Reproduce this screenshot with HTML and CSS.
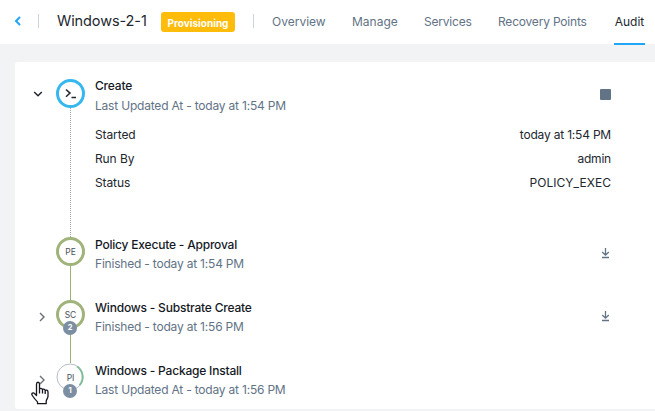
FILE: index.html
```html
<!DOCTYPE html>
<html lang="en">
<head>
<meta charset="utf-8">
<title>Windows-2-1 Audit</title>
<link rel="stylesheet" href="styles.css">
</head>
<body>
<header class="header">
  <svg class="back" width="8" height="12" viewBox="0 0 8 12"><path d="M6 2 2 6l4 4"/></svg>
  <span class="divider first"></span>
  <h1 class="name">Windows-2-1</h1>
  <span class="badge">Provisioning</span>
  <span class="divider second"></span>
  <nav class="tabs">
    <a class="tab overview">Overview</a>
    <a class="tab manage">Manage</a>
    <a class="tab services">Services</a>
    <a class="tab recovery">Recovery Points</a>
    <a class="tab audit active">Audit</a>
  </nav>
</header>
<main class="card">
  <section class="row expanded">
    <div class="toggle"><svg width="10" height="8" viewBox="0 0 10 8"><path d="m1.2 2 3.8 3.8L8.8 2"/></svg></div>
    <div class="rail dotted">
      <div class="node running"><svg width="14" height="12" viewBox="0 0 14 12"><path d="m2 1.5 4 3.6-4 3.7M7.5 9.5H12"/></svg></div>
    </div>
    <div class="body">
      <div class="title">Create</div>
      <div class="sub">Last Updated At - today at 1:54 PM</div>
      <dl class="details">
        <div><dt>Started</dt><dd>today at 1:54 PM</dd></div>
        <div><dt>Run By</dt><dd>admin</dd></div>
        <div><dt>Status</dt><dd class="code">POLICY_EXEC</dd></div>
      </dl>
    </div>
    <div class="action stop"><i></i></div>
  </section>
  <section class="row">
    <div class="toggle"></div>
    <div class="rail"><div class="node">PE</div></div>
    <div class="body">
      <div class="title">Policy Execute - Approval</div>
      <div class="sub">Finished - today at 1:54 PM</div>
    </div>
    <div class="action"><svg width="9" height="12" viewBox="0 0 9 12"><path d="M4.5 1v7M1.2 5l3.3 3.2L7.8 5M1 10.5h7"/></svg></div>
  </section>
  <section class="row">
    <div class="toggle closed"><svg width="8" height="10" viewBox="0 0 8 10"><path d="m2 1 4 4-4 4"/></svg></div>
    <div class="rail"><div class="node">SC<b class="count">2</b></div></div>
    <div class="body">
      <div class="title">Windows - Substrate Create</div>
      <div class="sub">Finished - today at 1:56 PM</div>
    </div>
    <div class="action"><svg width="9" height="12" viewBox="0 0 9 12"><path d="M4.5 1v7M1.2 5l3.3 3.2L7.8 5M1 10.5h7"/></svg></div>
  </section>
  <section class="row last">
    <div class="toggle closed"><svg width="8" height="10" viewBox="0 0 8 10"><path d="m2 1 4 4-4 4"/></svg>
      <svg class="cursor" width="20" height="24" viewBox="0 0 20 24"><path d="M6.500 14.500V3.200C6.500.6 9.500.6 9.500 3.200v5.200c.2-1.500 2.800-1.400 3 .5.3-1.200 2.500-1 2.700.8.500-1 2.800-.7 2.800 1.200v4.400c0 2-1.800 3.200-1.800 5.200v2.200H7.500v-1.800C5.500 19 3.800 16.700 2.300 14.500c-1.500-2.300.9-3.600 2.500-1.700ZM9.500 8.500v4M12.500 9v3.500M15.200 10v3"/></svg>
    </div>
    <div class="rail"><div class="node progress"><svg class="ring" width="28" height="28" viewBox="0 0 28 28"><circle cx="14" cy="14" r="13"/><path d="M21 3.500A12.500 12.500 0 0 1 23.500 22.200"/></svg>PI<b class="count">1</b></div></div>
    <div class="body">
      <div class="title">Windows - Package Install</div>
      <div class="sub">Last Updated At - today at 1:56 PM</div>
    </div>
  </section>
</main>
</body>
</html>
```
FILE: styles.css
```css
* { box-sizing: border-box; }
body {
  margin: 0;
  height: 411px;
  overflow: hidden;
  background: #f2f3f5;
  color: #22272e;
  font: 12px/20px Inter, "Liberation Sans", sans-serif;
}
svg { display: block; fill: none; overflow: visible; }
.header {
  display: flex;
  align-items: flex-start;
  height: 44px;
  padding-left: 14px;
  background: #fff;
  white-space: nowrap;
}
.back { margin-top: 15px; stroke: #22a5f7; stroke-width: 2; }
.divider { width: 1px; height: 14px; margin-top: 14px; background: #cdd3da; }
.first { margin-left: 16px; }
.name {
  width: 104px;
  margin: 11px 0 0 18px;
  font-size: 14.5px;
  font-weight: 400;
  letter-spacing: -.1px;
}
.badge {
  width: 74px;
  height: 20px;
  border-radius: 3px;
  margin-top: 12px;
  background: #ffbc0b;
  color: #fff;
  font-size: 10px;
  font-weight: 700;
  line-height: 23px;
  text-align: center;
}
.second { margin-left: 18px; }
.tabs { display: flex; margin-left: 18px; gap: 27px; }
.tab { height: 45px; color: #627386; line-height: 44px; }
.overview { width: 53px; }
.manage { width: 45px; }
.services { width: 47px; letter-spacing: -.2px; }
.recovery { width: 89px; letter-spacing: -.2px; }
.audit { width: 31px; text-align: center; }
.active { color: #22272e; border-bottom: 2px solid #22a5f7; }
.card {
  height: 347px;
  margin: 18px 0 0 15px;
  padding-top: 17px;
  border-radius: 3px 0 0 3px;
  background: #fff;
}
.row { display: flex; height: 63px; }
.row.expanded { height: 158px; }
.toggle { position: relative; width: 41px; padding: 11px 0 0 18px; stroke: #22272e; stroke-width: 1.5; }
.toggle.closed { padding: 12px 0 0 23px; stroke: #6b7078; stroke-width: 1.4; }
.cursor { position: absolute; left: 15px; top: 18px; fill: #fff; stroke: #15171f; stroke-width: 1.3; stroke-linejoin: round; }
.rail { display: flex; flex-direction: column; align-items: center; width: 29px; }
.rail::after { content: ""; flex: 1; border-left: 1px solid #9cb36f; }
.rail.dotted::after { border-left: 1px dotted #9ba3ae; }
.last .rail::after { display: none; }
.node {
  position: relative;
  display: flex;
  align-items: center;
  justify-content: center;
  width: 29px;
  height: 29px;
  border: 3px solid #9fb37a;
  border-radius: 50%;
  color: #4b5059;
  font-size: 8.5px;
  line-height: 10px;
}
.running { border-color: #36b7ee; stroke: #22272e; stroke-width: 1.5; }
.progress { border-color: transparent; }
.ring { position: absolute; left: -3px; top: -3px; stroke: #b5bdc9; }
.ring path { stroke: #84bd9b; stroke-width: 2; }
.count {
  position: absolute;
  left: 4px;
  top: 18px;
  width: 14px;
  height: 14px;
  border-radius: 50%;
  background: #7c8fa2;
  color: #fff;
  font-size: 7.5px;
  line-height: 14px;
  text-align: center;
}
.body { width: 516px; margin-left: 10px; margin-top: -2px; white-space: nowrap; line-height: 19px; letter-spacing: -.2px; }
.expanded .body { margin-top: -3px; line-height: 20px; }
.title { color: #15191f; font-weight: 500; }
.sub { color: #627386; }
.details { margin: 7px 0 0; line-height: 24px; }
.details div { display: flex; justify-content: space-between; }
.details dt { letter-spacing: -.1px; }
.details dd { margin: 0; }
.details .code { letter-spacing: .05px; }
.action { width: 0; }
.action svg { margin: 10px 0 0 -10px; stroke: #627386; stroke-width: 1.3; }
.stop i { display: block; width: 11px; height: 11px; margin: 10px 0 0 -11px; border-radius: 1px; background: #627386; }
```
